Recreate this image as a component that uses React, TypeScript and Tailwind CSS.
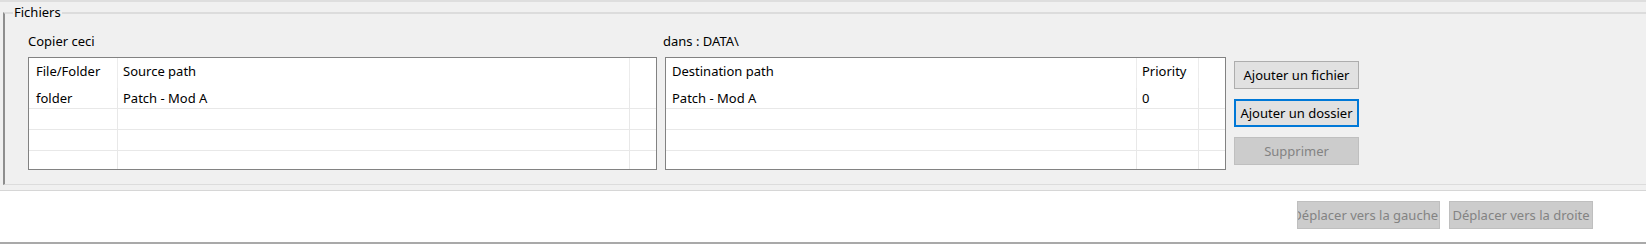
import React from "react";

function Grid({
  cols,
  header,
  rows,
}: {
  cols: { cls: string }[];
  header: string[];
  rows: string[][];
}) {
  const n = cols.length;
  const emptyRows = 3 - rows.length;
  const lineRows: string[][] = [...rows];
  for (let i = 0; i < emptyRows; i++) lineRows.push(new Array(n).fill(""));
  return (
    <div className="h-[113px] border border-[#828282] bg-white flex flex-col overflow-hidden">
      <div className="h-[30px] flex shrink-0">
        {header.map((h, i) => (
          <div
            key={i}
            className={`${cols[i].cls} flex items-center pb-[3px] ${i < n - 1 ? "border-r border-[#ececec]" : ""}`}
          >
            {h}
          </div>
        ))}
      </div>
      {lineRows.map((r, ri) => (
        <div key={ri} className="h-[21px] flex shrink-0 border-b border-[#e8e8e8]">
          {r.map((c, i) => (
            <div
              key={i}
              className={`${cols[i].cls} flex items-center pt-[1px] ${i < n - 1 ? "border-r border-[#e8e8e8]" : ""}`}
            >
              {c}
            </div>
          ))}
        </div>
      ))}
      <div className="flex-1 flex">
        {cols.map((c, i) => (
          <div
            key={i}
            className={`${c.cls} ${i < n - 1 ? "border-r border-[#e8e8e8]" : ""}`}
          />
        ))}
      </div>
    </div>
  );
}

export default function App() {
  return (
    <div className="w-[1646px] h-[246px] overflow-hidden bg-white font-['Noto_Sans',sans-serif] text-[13px] leading-[17px] text-black">
      <div className="h-[191px] bg-[#f0f0f0] border-t-2 border-t-[#dedede] border-b border-b-[#d6d6d6] pl-[3px] pt-[2px]">
        <fieldset className="h-[181px] min-w-0 border-t-2 border-l-2 border-b border-r-0 border-t-[#dcdcdc] border-b-[#dcdcdc] border-l-[#8e8e8e]">
          <legend className="ml-[8px] px-[1px]">Fichiers</legend>
          <div className="flex items-start pl-[23px] mt-[12px]">
            <div className="w-[629px] flex flex-col">
              <div className="h-[17px]">Copier ceci</div>
              <div className="mt-[7px]">
                <Grid
                  cols={[
                    { cls: "w-[89px] shrink-0 pl-[7px]" },
                    { cls: "w-[512px] shrink-0 pl-[5px]" },
                    { cls: "flex-1" },
                  ]}
                  header={["File/Folder", "Source path", ""]}
                  rows={[["folder", "Patch - Mod A", ""]]}
                />
              </div>
            </div>
            <div className="ml-[8px] w-[561px] flex flex-col">
              <div className="h-[17px] -ml-[2px]">dans : DATA\</div>
              <div className="mt-[7px]">
                <Grid
                  cols={[
                    { cls: "w-[471px] shrink-0 pl-[6px]" },
                    { cls: "w-[62px] shrink-0 pl-[5px]" },
                    { cls: "flex-1" },
                  ]}
                  header={["Destination path", "Priority", ""]}
                  rows={[["Patch - Mod A", "0", ""]]}
                />
              </div>
            </div>
            <div className="ml-[8px] w-[125px] pt-[28px] flex flex-col gap-[10px]">
              <button className="h-[28px] w-full border border-[#adadad] bg-[#e1e1e1] flex items-center justify-center whitespace-nowrap">
                Ajouter un fichier
              </button>
              <button className="h-[28px] w-full border-2 border-[#0078d7] bg-[#e1e1e1] flex items-center justify-center whitespace-nowrap">
                Ajouter un dossier
              </button>
              <button
                disabled
                className="h-[28px] w-full border border-[#bfbfbf] bg-[#cccccc] text-[#838383] flex items-center justify-center whitespace-nowrap"
              >
                Supprimer
              </button>
            </div>
          </div>
        </fieldset>
      </div>
      <div className="h-[53px] bg-white border-b-2 border-b-[#a9a9a9] flex justify-end items-start pt-[10px] pr-[53px] gap-[9px]">
        <button
          disabled
          className="h-[28px] w-[143px] border border-[#bfbfbf] bg-[#cccccc] text-[#838383] flex items-center justify-end overflow-hidden whitespace-nowrap pr-[1px]"
        >
          <span className="shrink-0">Déplacer vers la gauche</span>
        </button>
        <button
          disabled
          className="h-[28px] w-[144px] border border-[#bfbfbf] bg-[#cccccc] text-[#838383] flex items-center justify-center overflow-hidden whitespace-nowrap"
        >
          Déplacer vers la droite
        </button>
      </div>
    </div>
  );
}
